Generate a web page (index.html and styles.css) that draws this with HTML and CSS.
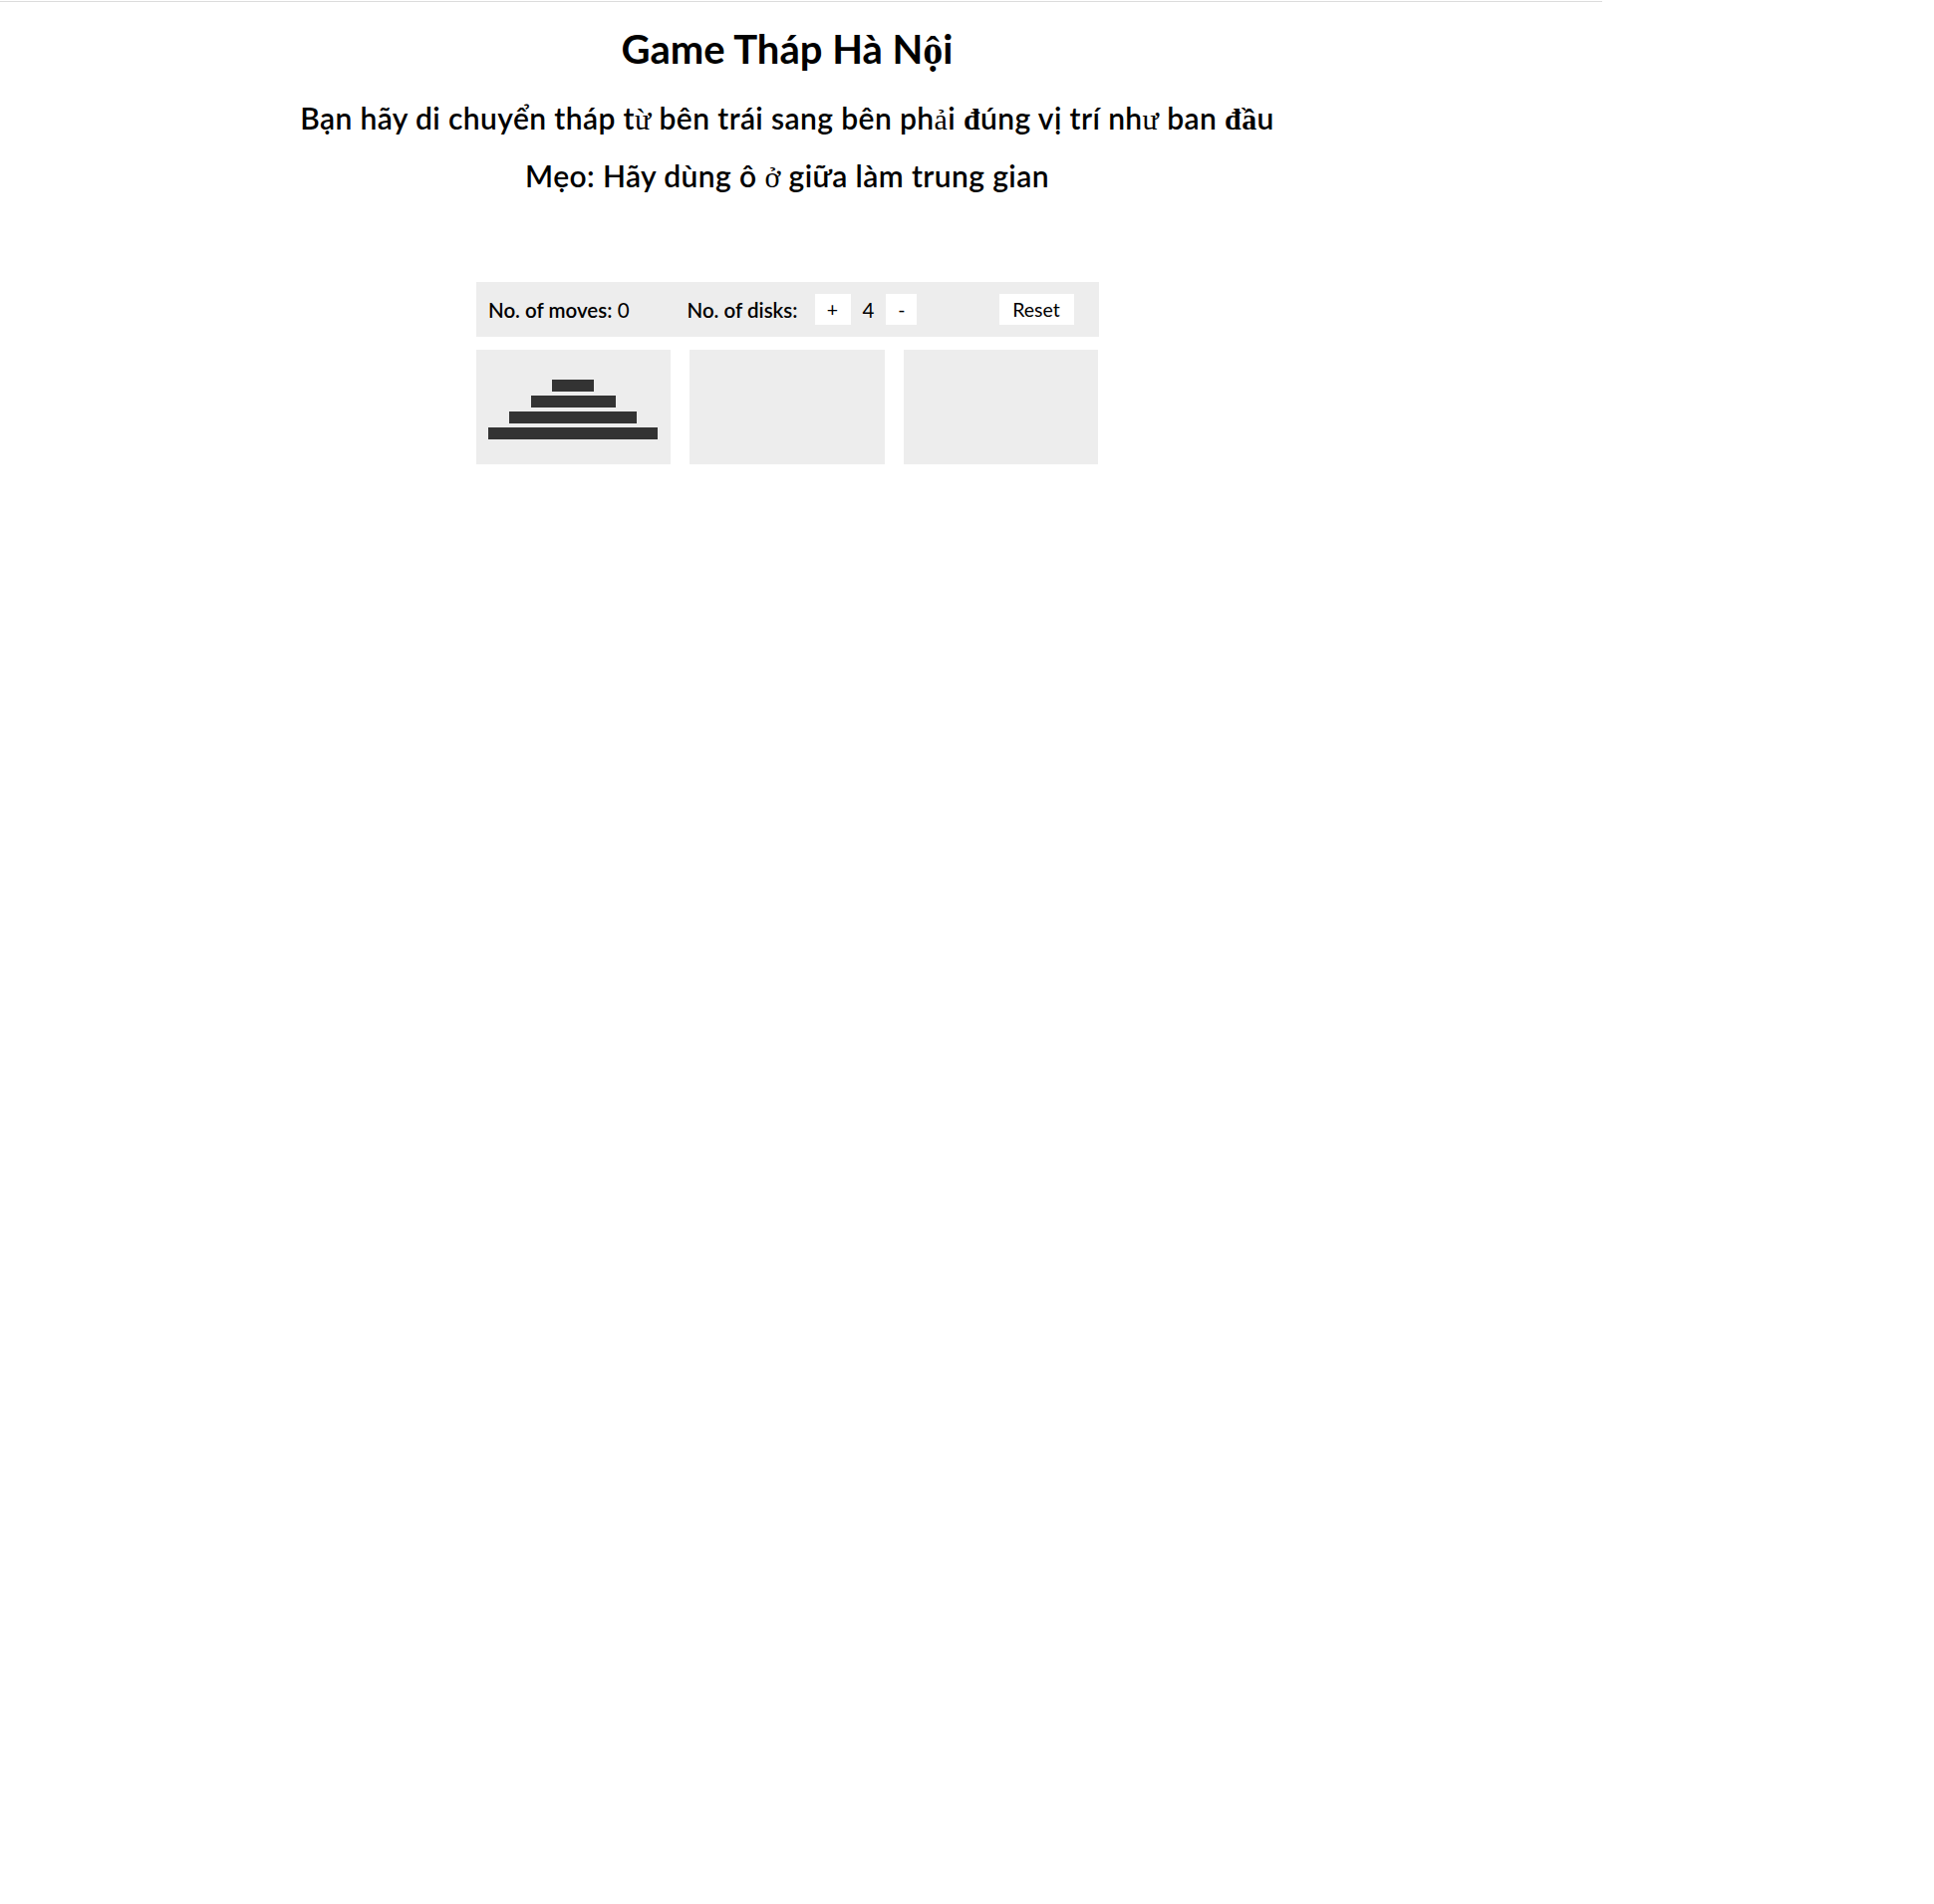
FILE: index.html
```html
<!DOCTYPE html>
<html lang="vi">
<head>
<meta charset="utf-8">
<title>Game Tháp Hà Nội</title>
<link rel="stylesheet" href="styles.css">
</head>
<body>
<div class="topline"></div>
<div class="page">
  <h1 class="title">Game Tháp Hà N<span class="fb fb-bold">ộ</span>i</h1>
  <h3 class="sub sub-first">Bạn hãy di chuyển tháp t<span class="fb">ừ</span> bên trái sang bên ph<span class="fb">ả</span>i <span class="fb fb-bold">đ</span>úng vị trí nh<span class="fb">ư</span> ban <span class="fb fb-bold">đầ</span>u</h3>
  <h3 class="sub sub-second">Mẹo: Hãy dùng ô <span class="fb">ở</span> giữa làm trung gian</h3>

  <div class="game">
    <div class="controls">
      <div class="stat stat-moves"><span class="label">No. of moves:</span> <span class="value">0</span></div>
      <div class="stat stat-disks">
        <span class="label label-disks">No. of disks:</span>
        <button class="btn btn-small">+</button>
        <span class="value count">4</span>
        <button class="btn btn-small btn-minus">-</button>
      </div>
      <button class="btn btn-reset">Reset</button>
    </div>
    <div class="towers">
      <div class="tower">
        <div class="disk" style="width:25%"></div>
        <div class="disk" style="width:50%"></div>
        <div class="disk" style="width:75%"></div>
        <div class="disk" style="width:100%"></div>
      </div>
      <div class="tower"></div>
      <div class="tower"></div>
    </div>
  </div>
</div>
</body>
</html>
```
FILE: styles.css
```css
html, body {
  margin: 0;
  padding: 0;
  background: #ffffff;
}

body {
  font-family: Lato, "Noto Sans", sans-serif;
  color: #000;
}

.topline {
  width: 1608px;
  height: 1px;
  margin-top: 1px;
  background: #dcdcdc;
}

.page {
  width: 1580px;
  text-align: center;
}

.fb {
  font-family: "Liberation Serif", serif;
  font-weight: 400;
  line-height: 1;
}

.fb-bold {
  font-weight: 700;
}

.title {
  font-size: 40px;
  font-weight: 700;
  line-height: 48px;
  margin: 23px 0 0;
}

.sub {
  font-size: 30px;
  font-weight: 600;
  letter-spacing: 0.4px;
  line-height: 34px;
  margin: 0;
}

.sub-first {
  margin-top: 28px;
}

.sub-second {
  margin-top: 24px;
}

.game {
  width: 625px;
  margin: 90px auto 0;
  text-align: left;
}

.controls {
  display: flex;
  align-items: center;
  height: 55px;
  padding: 0 25px 0 12.5px;
  background: #ededed;
  box-sizing: border-box;
  font-size: 20.5px;
}

.label {
  font-weight: 600;
}

.stat-moves {
  width: 199.5px;
  flex: none;
}

.stat-disks {
  display: flex;
  align-items: center;
}

.label-disks {
  width: 128px;
}

.count {
  margin: 0 12px;
}

.btn {
  font-family: inherit;
  font-size: 19.5px;
  height: 31px;
  border: none;
  background: #ffffff;
  color: #000;
  padding: 0;
}

.btn-small {
  width: 36px;
}

.btn-minus {
  width: 31px;
}

.btn-reset {
  width: 75px;
  margin-left: auto;
}

.towers {
  display: grid;
  grid-template-columns: 1fr 1fr 1fr;
  column-gap: 19.5px;
  margin-top: 13px;
}

.tower {
  height: 115px;
  padding: 0 12.5px 25px;
  box-sizing: border-box;
  background: #ededed;
  display: flex;
  flex-direction: column;
  justify-content: flex-end;
  align-items: center;
}

.disk {
  height: 12.5px;
  margin-top: 3.5px;
  background: #333333;
}
```
